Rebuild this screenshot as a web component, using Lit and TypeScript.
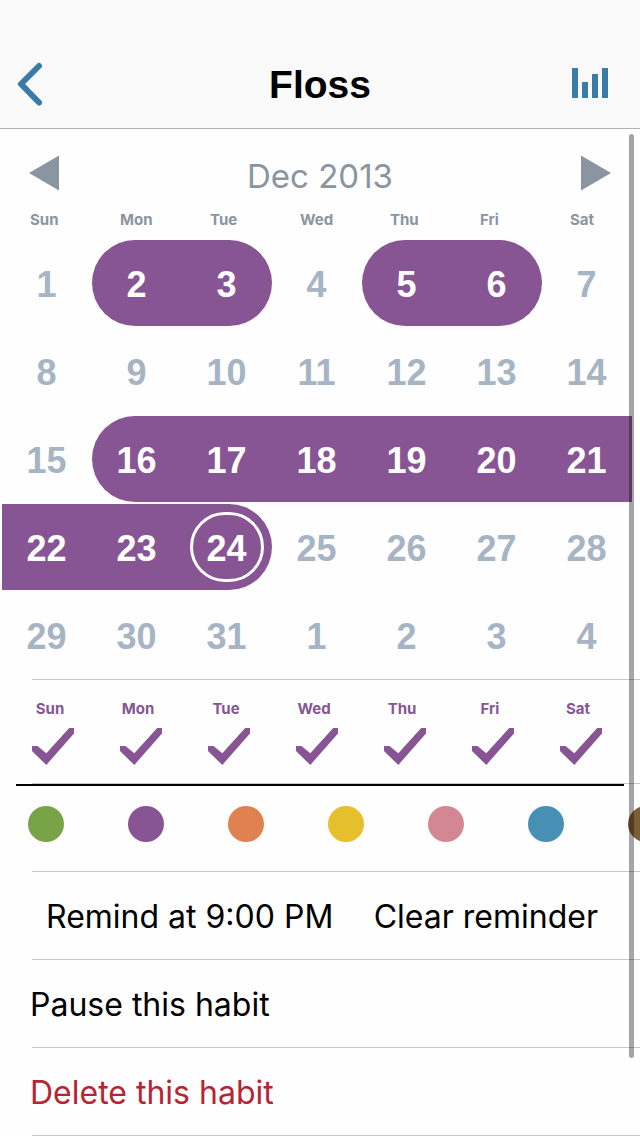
import { LitElement, html, css, svg } from "lit";
import { customElement, state } from "lit/decorators.js";
import { classMap } from "lit/directives/class-map.js";
import { styleMap } from "lit/directives/style-map.js";

const WEEKDAYS = ["Sun", "Mon", "Tue", "Wed", "Thu", "Fri", "Sat"];

const COLORS = [
  { name: "Green", value: "#78a347" },
  { name: "Purple", value: "#885594" },
  { name: "Orange", value: "#e28150" },
  { name: "Yellow", value: "#e6bf2c" },
  { name: "Pink", value: "#d38793" },
  { name: "Blue", value: "#4790b4" },
  { name: "Brown", value: "#7d5d35" },
];

interface Day {
  label: number;
  done: boolean;
  start: boolean;
  end: boolean;
  today: boolean;
}

const DONE = new Set([2, 3, 5, 6, 16, 17, 18, 19, 20, 21, 22, 23, 24]);

// Five weeks starting on Sunday, December 1.
const DAYS: Day[] = Array.from({ length: 35 }, (_, i) => {
  const n = i + 1;
  const done = DONE.has(n);
  return {
    label: n > 31 ? n - 31 : n,
    done,
    start: done && !DONE.has(n - 1),
    end: done && !DONE.has(n + 1),
    today: n === 24,
  };
});

@customElement("habit-header")
export class HabitHeader extends LitElement {
  static styles = css`
    :host {
      display: block;
    }
    .bar {
      display: grid;
      grid-template-columns: 80px 1fr 80px;
      height: 88px;
      padding-top: 40px;
      background: #f9f9f9;
      border-bottom: 1px solid #b2b2b2;
    }
    .title {
      margin: 0;
      text-align: center;
      font: bold 39px/90px "Liberation Sans", Arial, sans-serif;
      color: #000;
    }
    .action {
      display: flex;
      align-items: center;
      border: 0;
      padding: 0 16px 2px;
      background: none;
      color: #3a7ca8;
      cursor: pointer;
    }
    .action.end {
      justify-content: flex-end;
      padding: 0 32px 2px 0;
    }
  `;

  render() {
    return html`
      <header class="bar">
        <button class="action" aria-label="Back">
          <svg width="28" height="44" viewBox="0 0 28 44" fill="none">
            <path d="M23 4L5 22L23 40.500" stroke="currentColor" stroke-width="6" stroke-linecap="round" stroke-linejoin="round" />
          </svg>
        </button>
        <h1 class="title">Floss</h1>
        <button class="action end" aria-label="Statistics">
          <svg width="36" height="32" viewBox="0 0 36 32" fill="currentColor">
            <path d="M0 0h6v30H0zM10 14h6v16h-6zM20 6h6v24h-6zM30 0h6v30h-6z" />
          </svg>
        </button>
      </header>
    `;
  }
}

@customElement("habit-calendar")
export class HabitCalendar extends LitElement {
  static styles = css`
    :host {
      display: block;
      color: #8a95a1;
    }
    .month {
      display: grid;
      grid-template-columns: 60px 1fr 60px;
      height: 80px;
      padding: 0 16px;
    }
    .name {
      margin: 0;
      text-align: center;
      font: 400 33px/94px Inter, "Noto Sans", sans-serif;
    }
    .step {
      display: flex;
      align-items: center;
      justify-content: flex-start;
      height: 88px;
      border: 0;
      padding: 0 12px;
      background: none;
      color: inherit;
      cursor: pointer;
    }
    .step.next {
      justify-content: flex-end;
    }
    .grid {
      display: grid;
      grid-template-columns: repeat(7, 1fr);
      row-gap: 2px;
      padding: 0 8px 0 2px;
    }
    .weekday {
      padding-left: 28px;
      font: 700 15px/22px Inter, "Liberation Sans", sans-serif;
      height: 31px;
    }
    .day {
      position: relative;
      height: 86px;
      border: 0;
      padding: 4px 1px 0 0;
      background: none;
      color: #a6b4c4;
      font: bold 36px/42px "Liberation Sans", Arial, sans-serif;
      cursor: pointer;
    }
    .done {
      background: #885594;
      color: #fff;
    }
    .start {
      border-top-left-radius: 43px;
      border-bottom-left-radius: 43px;
    }
    .end {
      border-top-right-radius: 43px;
      border-bottom-right-radius: 43px;
    }
    .today::after {
      content: "";
      position: absolute;
      inset: 8px;
      border: 3px solid #fff;
      border-radius: 35px;
    }
  `;

  render() {
    return html`
      <div class="month">
        <button class="step" aria-label="Previous month">
          <svg width="32" height="36" viewBox="0 0 32 36"><path d="M1 18L31 .5V35.500z" fill="currentColor" /></svg>
        </button>
        <h2 class="name">Dec 2013</h2>
        <button class="step next" aria-label="Next month">
          <svg width="32" height="36" viewBox="0 0 32 36"><path d="M31 18L1 .5V35.500z" fill="currentColor" /></svg>
        </button>
      </div>
      <div class="grid">${WEEKDAYS.map((d) => html`<div class="weekday">${d}</div>`)}</div>
      <div class="grid">
        ${DAYS.map(
          (d) => html`<button
            class=${classMap({ day: true, done: d.done, start: d.start, end: d.end, today: d.today })}
          >${d.label}</button>`
        )}
      </div>
    `;
  }
}

@customElement("app-root")
export class AppRoot extends LitElement {
  @state() private color = "Purple";

  static styles = css`
    :host {
      display: block;
      min-height: 100vh;
      background: #fefefe;
      overflow: hidden;
    }
    .content {
      position: relative;
    }
    .calendar {
      padding-bottom: 1px;
    }
    .rule {
      height: 1px;
      margin: 0 0 0 32px;
      border: 0;
      background: #c7c7c9;
    }
    .schedule {
      display: grid;
      grid-template-columns: repeat(7, 1fr);
      padding: 18px 18px 0 6px;
      height: 85px;
      color: #885594;
      font: 700 15px/22px Inter, "Liberation Sans", sans-serif;
    }
    .weekday {
      display: grid;
      grid-template-rows: 22px 48px;
      justify-items: center;
      align-content: start;
      cursor: pointer;
    }
    .weekday input {
      grid-area: 2 / 1;
      width: 48px;
      height: 48px;
      margin: 0;
      appearance: none;
    }
    .weekday svg {
      grid-area: 2 / 1;
      visibility: hidden;
      pointer-events: none;
    }
    .weekday input:checked + svg {
      visibility: visible;
    }
    .palette {
      height: 87px;
    }
    .divider {
      height: 2px;
      margin: 0 16px;
      border: 0;
      background: #000;
    }
    .colors {
      display: flex;
      gap: 64px;
      height: 76px;
      padding-left: 28px;
      align-items: center;
      overflow: hidden;
    }
    .swatch {
      flex: none;
      width: 36px;
      height: 36px;
      margin: 0;
      border-radius: 50%;
      appearance: none;
      cursor: pointer;
    }
    .row {
      display: flex;
      height: 87px;
      padding: 0 30px;
      justify-content: flex-start;
    }
    .row.split {
      justify-content: space-between;
      padding: 0 42px 0 46px;
    }
    .link {
      border: 0;
      padding: 2px 0 0;
      background: none;
      color: #000;
      font: 400 32px/40px Inter, "Noto Sans", sans-serif;
      white-space: nowrap;
      cursor: pointer;
    }
    .link.danger {
      color: #b52532;
    }
    .scrollbar {
      position: absolute;
      top: 5px;
      right: 6px;
      bottom: 78px;
      width: 5px;
      border-radius: 3px;
      background: rgba(0, 0, 0, 0.35);
      pointer-events: none;
    }
  `;

  render() {
    const check = svg`<path d="M6 20H11.500L20.300 27.200L43.200 2H48V7.500L20.300 39L6 25z" fill="currentColor" />`;
    return html`
      <habit-header></habit-header>
      <main class="content">
        <habit-calendar class="calendar"></habit-calendar>
        <hr class="rule" />
        <div class="schedule">
          ${WEEKDAYS.map(
            (d) => html`<label class="weekday">
              <span>${d}</span>
              <input type="checkbox" checked />
              <svg width="48" height="48" viewBox="0 -6 48 48">${check}</svg>
            </label>`
          )}
        </div>
        <hr class="rule" />
        <div class="palette">
          <hr class="divider" />
          <div class="colors" role="radiogroup" aria-label="Color">
            ${COLORS.map(
              (c) => html`<input
                class="swatch"
                type="radio"
                name="color"
                aria-label=${c.name}
                .checked=${c.name === this.color}
                @change=${() => (this.color = c.name)}
                style=${styleMap({ backgroundColor: c.value })}
              />`
            )}
          </div>
        </div>
        <hr class="rule" />
        <div class="row split">
          <button class="link">Remind at 9:00 PM</button>
          <button class="link">Clear reminder</button>
        </div>
        <hr class="rule" />
        <div class="row"><button class="link">Pause this habit</button></div>
        <hr class="rule" />
        <div class="row"><button class="link danger">Delete this habit</button></div>
        <hr class="rule" />
        <div class="scrollbar"></div>
      </main>
    `;
  }
}
